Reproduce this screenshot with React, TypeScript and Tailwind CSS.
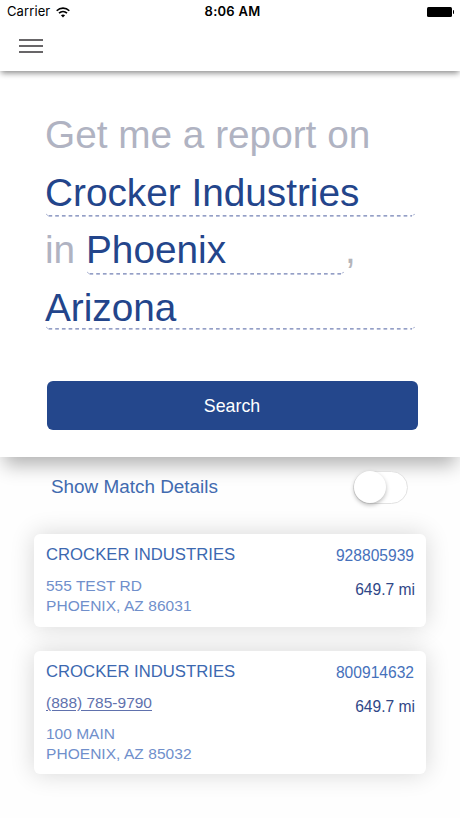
import React from "react";

type Company = {
  name: string;
  id: string;
  distance: string;
  phone?: string;
  street: string;
  city: string;
};

const companies: Company[] = [
  { name: "CROCKER INDUSTRIES", id: "928805939", distance: "649.7 mi", street: "555 TEST RD", city: "PHOENIX, AZ 86031" },
  { name: "CROCKER INDUSTRIES", id: "800914632", distance: "649.7 mi", phone: "(888) 785-9790", street: "100 MAIN", city: "PHOENIX, AZ 85032" },
];

function DashedLine({ width }: { width: number }) {
  return (
    <svg className="ml-[1px] block shrink-0" width={width} height="5" viewBox={`0 0 ${width} 5`} fill="none" stroke="#7280b4" aria-hidden="true">
      <line x1="2.5" y1="2.8" x2={width - 3} y2="2.8" strokeWidth="1.3" strokeDasharray="3.7 3" />
      <path d={`M.3 1.2l1.4 1.2M${width - 1.8} 2.4l1.5-1.5`} strokeWidth="0.8" />
    </svg>
  );
}

function StatusBar() {
  return (
    <div className="grid h-6 grid-cols-3 items-center pl-[7px] pr-[6px] font-['Inter',sans-serif] text-[13px] text-black">
      <div className="flex items-center gap-[6px]">
        <span className="tracking-[0.1px]">Carrier</span>
        <svg width="14" height="11" viewBox="0 0 14 11" fill="none" stroke="#000" strokeWidth="1.6">
          <path d="M.7 3.8C4.3.2 9.7.2 13.3 3.8" />
          <path d="M3 6.2c2.3-2.2 5.7-2.2 8 0" />
          <path d="M7 10.4 4.9 8.2c1.2-1.1 3-1.1 4.2 0z" fill="#000" stroke="none" />
        </svg>
      </div>
      <span className="pl-[4px] text-center font-semibold tracking-[0.25px]">8:06 AM</span>
      <div className="flex items-center justify-end">
        <span className="h-[10px] w-[25px] rounded-[1.5px] bg-black" />
        <span className="ml-px h-[4px] w-px rounded-r bg-black" />
      </div>
    </div>
  );
}

function Card({ company }: { company: Company }) {
  return (
    <article
      className={
        "flex justify-between rounded-[6px] bg-white pl-3 pr-[11px] shadow-[0_0_24px_rgba(0,0,0,0.16)] " +
        (company.phone ? "h-[123px]" : "h-[93px]")
      }
    >
      <div className="pt-[9px]">
        <h2 className="text-[16.7px] leading-6 text-[#3c68b0]">{company.name}</h2>
        {company.phone && (
          <a className="mt-[9px] block text-[15.5px] leading-5 text-[#6071ad] underline underline-offset-2">{company.phone}</a>
        )}
        <address className={"text-[15.5px] leading-5 text-[#708fcb] not-italic " + (company.phone ? "mt-[11px]" : "mt-[9px]")}>
          {company.street}
          <br />
          <span className="tracking-[0.05px]">{company.city}</span>
        </address>
      </div>
      <div className="flex flex-col items-end pt-[12px] text-[15.6px] leading-5">
        <span className="pr-px text-[#4671bb]">{company.id}</span>
        <span className="mt-[14px] text-[#304787]">{company.distance}</span>
      </div>
    </article>
  );
}

export default function App() {
  return (
    <div className="h-[818px] w-[460px] overflow-hidden bg-[#fefefe] font-['Liberation_Sans',Arial,sans-serif]">
      <header className="relative z-20 h-[71px] bg-white shadow-[0_3px_6px_-1px_rgba(0,0,0,0.48)]">
        <StatusBar />
        <button className="ml-[19px] mt-[15px] flex w-6 flex-col gap-[4px]" aria-label="Menu">
          <span className="h-[2px] w-full bg-[#686668]" />
          <span className="h-[2px] w-full bg-[#686668]" />
          <span className="h-[2px] w-full bg-[#686668]" />
        </button>
      </header>

      <section className="relative z-10 h-[386px] bg-white px-[45px] pt-[35px] text-[38.75px] text-[#23458b] shadow-[0_12px_18px_-4px_rgba(0,0,0,0.3)]">
        <div className="h-[58px] whitespace-nowrap leading-[58px] text-[#b0b3c2]">Get me a report on</div>
        <div className="flex h-[57px] flex-col leading-[57px]">
          <span className="h-[49px]">Crocker Industries</span>
          <DashedLine width={369} />
        </div>
        <div className="flex h-[58px] leading-[58px]">
          <span className="w-[41px] whitespace-pre text-[#b0b3c2]">in </span>
          <div className="flex w-[259px] flex-col">
            <span className="h-[50px]">Phoenix</span>
            <DashedLine width={257} />
          </div>
          <span className="text-[#b5b5ba]">,</span>
        </div>
        <div className="flex h-[58px] flex-col leading-[58px]">
          <span className="h-[47px]">Arizona</span>
          <DashedLine width={369} />
        </div>
        <button className="ml-[2px] mt-[44px] flex h-[49px] w-[371px] items-center justify-center rounded-[6px] bg-[#24478c] pr-px pt-[2px] text-[17.8px] text-white">
          Search
        </button>
      </section>

      <main className="px-[34px]">
        <div className="flex h-[61px] items-center justify-between pl-[17px] pr-[18px]">
          <span className="text-[18.9px] text-[#426bb0]">Show Match Details</span>
          <button className="relative z-20 mb-px flex h-[33px] w-[55px] items-center rounded-full border border-[#e2e2e2] bg-white" aria-label="Show Match Details">
            <span className="size-8 rounded-full bg-white shadow-[0_2px_4px_rgba(0,0,0,0.28)]" />
          </button>
        </div>
        <div className="mt-[16px] flex flex-col gap-[24px]">
          {companies.map((company) => (
            <Card key={company.id} company={company} />
          ))}
        </div>
      </main>
    </div>
  );
}
